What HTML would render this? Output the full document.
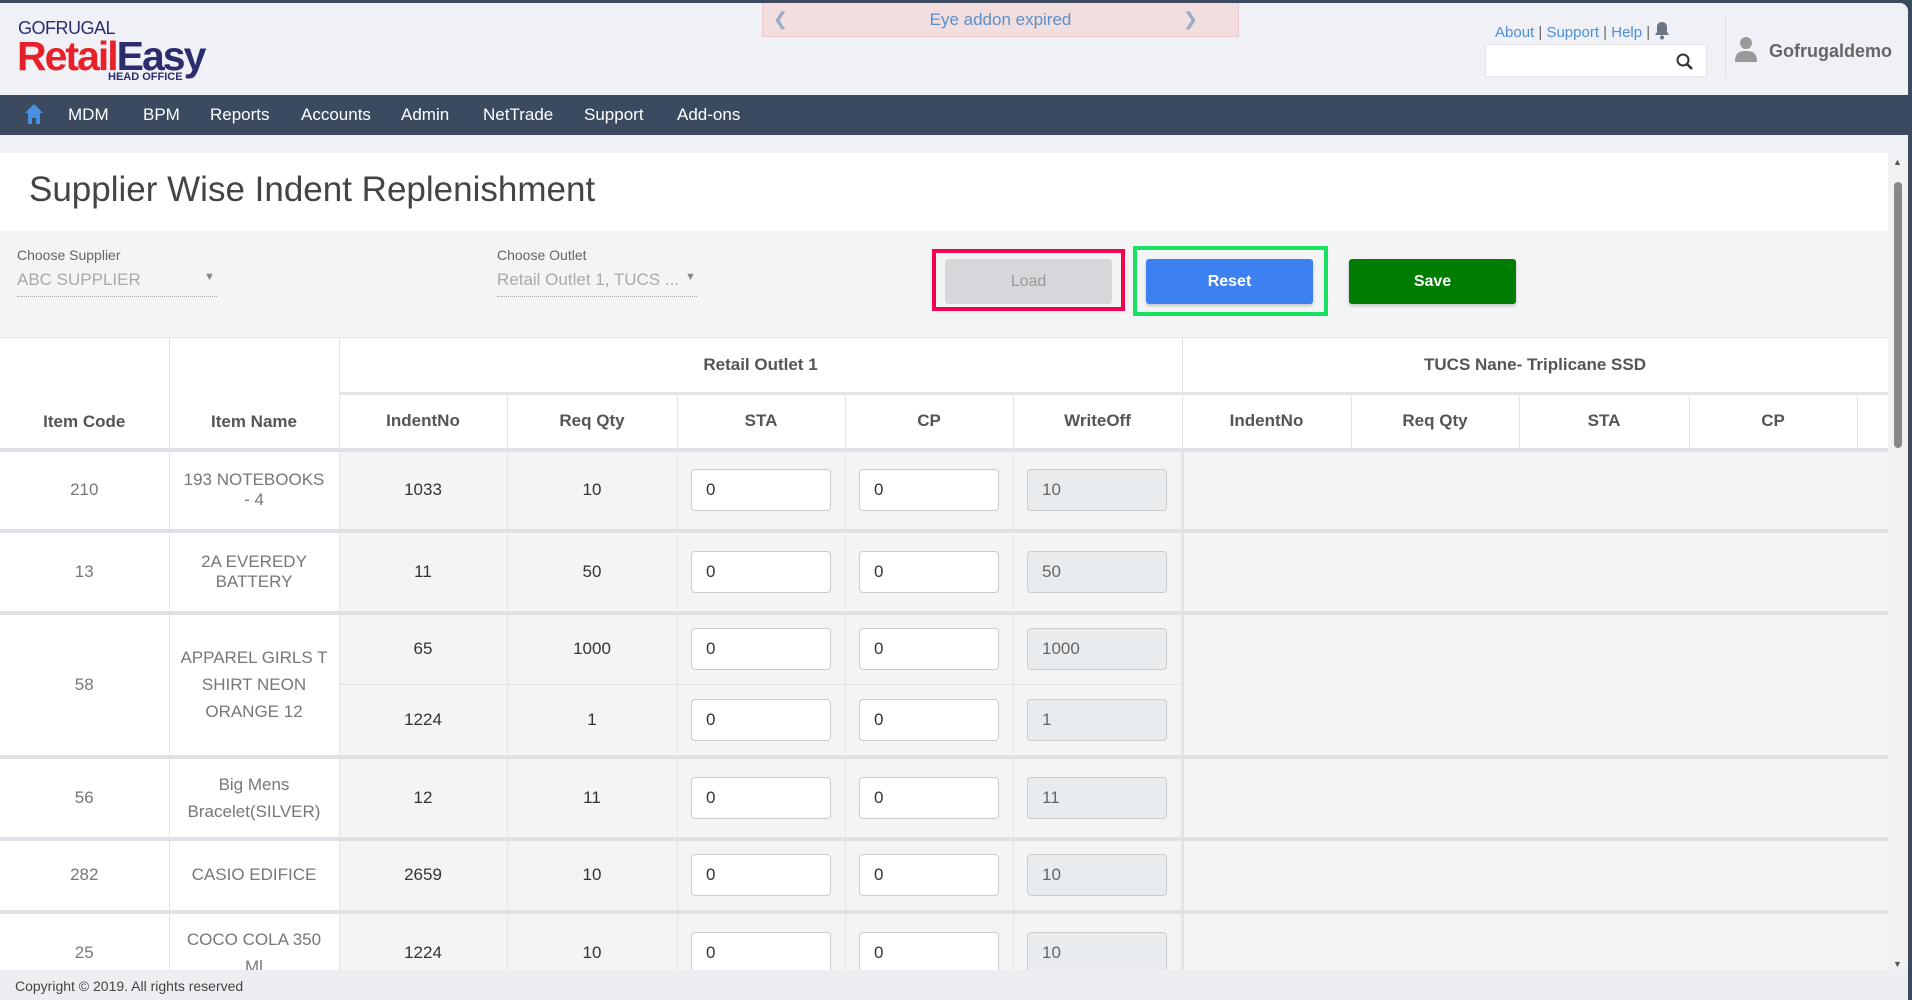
<!DOCTYPE html>
<html><head><meta charset="utf-8"><style>
*{box-sizing:border-box;margin:0;padding:0}
body{width:1912px;height:1000px;overflow:hidden;background:#3b4a5f;font-family:"Liberation Sans",sans-serif;position:relative}
.page{position:absolute;left:0;top:3px;width:1908px;height:997px;background:#f0f1f6;border-top-right-radius:8px;overflow:hidden}
.abs{position:absolute}
.nav{position:absolute;left:0;top:92px;width:1908px;height:40px;background:#3b4a5f;color:#fff;font-size:17px}
.nav span{position:absolute;top:10px}
.content{position:absolute;left:0;top:150px;width:1888px;height:820px;background:#fff;overflow:hidden}
table{border-collapse:collapse;table-layout:fixed;position:absolute;left:0;top:184px;width:1888px}
td{border:1px solid #e3e4e8;text-align:center;font-size:17px;color:#333;padding:0}
th{border:1px solid #e3e4e8;font-size:17px;color:#555;font-weight:bold;background:#fff}
tr>*:first-child{border-left:none}
.g{background:#f3f4f6}
.w{background:#fff;color:#777}
.inp{display:block;margin:0 auto;width:140px;height:42px;border:1px solid #ccc;border-radius:4px;background:#fff;text-align:left;padding-left:14px;line-height:40px;font-size:17px;color:#333}
.ro{background:#e9ecef;color:#666}
.thick td{border-top:4px solid #dfe1e6}
.btn{position:absolute;top:106px;height:45px;width:167px;border-radius:3px;text-align:center;line-height:45px;font-size:16px;font-weight:bold;color:#fff}
</style></head><body>
<div class="page">
 <div class="abs" style="left:18px;top:15px;font-size:18px;color:#2b2d6e;letter-spacing:-0.5px">GOFRUGAL</div>
 <div class="abs" style="left:17px;top:30px;font-size:41px;font-weight:bold;letter-spacing:-2px"><span style="color:#e8202a">Retail</span><span style="color:#2b2d6e">Easy</span></div>
 <div class="abs" style="left:108px;top:68px;font-size:11px;font-weight:bold;color:#2b2d6e">HEAD OFFICE</div>
 <div class="abs" style="left:762px;top:0px;width:477px;height:34px;background:#f2dede;border:1px solid #ebcccc;border-top:none;text-align:center;line-height:34px;font-size:17px;color:#5b8fc9">Eye addon expired
  <span class="abs" style="left:10px;top:-1px;color:#9aaac8;font-size:18px">&#10094;</span><span class="abs" style="right:40px;top:-1px;color:#9aaac8;font-size:18px">&#10095;</span></div>
 <div class="abs" style="left:1495px;top:21px;font-size:15px;color:#4a90d9">About <span style="color:#666">|</span> Support <span style="color:#666">|</span> Help <span style="color:#666">|</span></div>
 <svg class="abs" style="left:1654px;top:18px" width="16" height="19" viewBox="0 0 16 19"><path d="M8 1c-3 0-5 2-5 5v5l-2 3h14l-2-3V6c0-3-2-5-5-5z" fill="#6b7583"/><circle cx="8" cy="16.5" r="2" fill="#6b7583"/></svg>
 <div class="abs" style="left:1485px;top:41px;width:222px;height:33px;background:#fff;border-radius:3px;border:1px solid #e4e4ea"><svg class="abs" style="right:12px;top:8px" width="18" height="18" viewBox="0 0 18 18"><circle cx="7" cy="7" r="5.5" fill="none" stroke="#333" stroke-width="2"/><path d="M11 11l5 5" stroke="#333" stroke-width="2.5"/></svg></div>
 <div class="abs" style="left:1725px;top:12px;width:1px;height:62px;background:#dcdce2"></div>
 <svg class="abs" style="left:1735px;top:33px" width="22" height="28" viewBox="0 0 22 28"><circle cx="11" cy="7" r="6" fill="#999"/><path d="M0 26c0-9 4-11 11-11s11 2 11 11z" fill="#999"/></svg>
 <div class="abs" style="left:1769px;top:38px;font-size:18px;font-weight:bold;color:#666">Gofrugaldemo</div>
 <div class="nav">
  <svg class="abs" style="left:24px;top:8px" width="20" height="22" viewBox="0 0 20 22"><path d="M10 1L1 10h3v11h4v-6h4v6h4V10h3z" fill="#4a90e2"/></svg>
  <span style="left:68px">MDM</span><span style="left:143px">BPM</span><span style="left:210px">Reports</span><span style="left:301px">Accounts</span><span style="left:401px">Admin</span><span style="left:483px">NetTrade</span><span style="left:584px">Support</span><span style="left:677px">Add-ons</span>
 </div>
 <div class="content">
  <div class="abs" style="left:29px;top:17px;font-size:35px;color:#444;font-weight:300">Supplier Wise Indent Replenishment</div>
  <div class="abs" style="left:0;top:78px;width:1888px;height:106px;background:#f3f4f6"></div>
  <div class="abs" style="left:17px;top:94px;font-size:14px;color:#666">Choose Supplier</div>
  <div class="abs" style="left:17px;top:117px;font-size:17px;color:#aaa">ABC SUPPLIER</div>
  <div class="abs" style="left:204px;top:118px;font-size:11px;color:#888">&#9660;</div>
  <div class="abs" style="left:17px;top:143px;width:200px;border-top:1px dotted #aaa"></div>
  <div class="abs" style="left:497px;top:94px;font-size:14px;color:#666">Choose Outlet</div>
  <div class="abs" style="left:497px;top:117px;font-size:17px;color:#aaa">Retail Outlet 1, TUCS ...</div>
  <div class="abs" style="left:685px;top:118px;font-size:11px;color:#888">&#9660;</div>
  <div class="abs" style="left:497px;top:143px;width:200px;border-top:1px dotted #aaa"></div>
  <div class="abs" style="left:932px;top:96px;width:193px;height:62px;border:4px solid #f5004f"></div>
  <div class="btn" style="left:945px;background:#d6d7db;color:#999;font-weight:normal">Load</div>
  <div class="abs" style="left:1133px;top:93px;width:195px;height:70px;border:4px solid #18e060"></div>
  <div class="btn" style="left:1146px;background:#3d80f2;box-shadow:0 2px 3px rgba(0,0,0,.2)">Reset</div>
  <div class="btn" style="left:1349px;background:#007c00;box-shadow:0 2px 3px rgba(0,0,0,.2)">Save</div>
  <table>
   <colgroup><col style="width:169px"><col style="width:170px"><col style="width:168px"><col style="width:170px"><col style="width:168px"><col style="width:168px"><col style="width:169px"><col style="width:169px"><col style="width:168px"><col style="width:170px"><col style="width:168px"><col style="width:31px"></colgroup>
   <tr style="height:56px"><th rowspan="2" style="vertical-align:bottom;padding-bottom:16px">Item Code</th><th rowspan="2" style="vertical-align:bottom;padding-bottom:16px">Item Name</th><th colspan="5" style="border-bottom:3px solid #e3e4e8">Retail Outlet 1</th><th colspan="5" style="border-bottom:3px solid #e3e4e8">TUCS Nane- Triplicane SSD</th></tr>
   <tr style="height:56px"><th style="border-left:1px solid #e3e4e8">IndentNo</th><th>Req Qty</th><th>STA</th><th>CP</th><th>WriteOff</th><th>IndentNo</th><th>Req Qty</th><th>STA</th><th>CP</th><th></th></tr>
   <tr class="thick" style="height:81px"><td class="w">210</td><td class="w">193 NOTEBOOKS<br>- 4</td><td class="g">1033</td><td class="g">10</td><td class="g"><div class="inp">0</div></td><td class="g"><div class="inp">0</div></td><td class="g"><div class="inp ro">10</div></td><td class="g" colspan="5" style="border-left:3px solid #e3e4e8"></td></tr>
   <tr class="thick" style="height:82px"><td class="w">13</td><td class="w">2A EVEREDY<br>BATTERY</td><td class="g">11</td><td class="g">50</td><td class="g"><div class="inp">0</div></td><td class="g"><div class="inp">0</div></td><td class="g"><div class="inp ro">50</div></td><td class="g" colspan="5" style="border-left:3px solid #e3e4e8"></td></tr>
   <tr class="thick" style="height:72px"><td class="w" rowspan="2">58</td><td class="w" rowspan="2" style="line-height:27px">APPAREL GIRLS T<br>SHIRT NEON<br>ORANGE 12</td><td class="g">65</td><td class="g">1000</td><td class="g"><div class="inp">0</div></td><td class="g"><div class="inp">0</div></td><td class="g"><div class="inp ro">1000</div></td><td class="g" colspan="5" rowspan="2" style="border-left:3px solid #e3e4e8"></td></tr>
   <tr style="height:72px"><td class="g" style="border-left:1px solid #e3e4e8">1224</td><td class="g">1</td><td class="g"><div class="inp">0</div></td><td class="g"><div class="inp">0</div></td><td class="g"><div class="inp ro">1</div></td></tr>
   <tr class="thick" style="height:82px"><td class="w">56</td><td class="w" style="line-height:27px">Big Mens<br>Bracelet(SILVER)</td><td class="g">12</td><td class="g">11</td><td class="g"><div class="inp">0</div></td><td class="g"><div class="inp">0</div></td><td class="g"><div class="inp ro">11</div></td><td class="g" colspan="5" style="border-left:3px solid #e3e4e8"></td></tr>
   <tr class="thick" style="height:73px"><td class="w">282</td><td class="w">CASIO EDIFICE</td><td class="g">2659</td><td class="g">10</td><td class="g"><div class="inp">0</div></td><td class="g"><div class="inp">0</div></td><td class="g"><div class="inp ro">10</div></td><td class="g" colspan="5" style="border-left:3px solid #e3e4e8"></td></tr>
   <tr class="thick" style="height:82px"><td class="w">25</td><td class="w" style="line-height:27px">COCO COLA 350<br>Ml</td><td class="g">1224</td><td class="g">10</td><td class="g"><div class="inp">0</div></td><td class="g"><div class="inp">0</div></td><td class="g"><div class="inp ro">10</div></td><td class="g" colspan="5" style="border-left:3px solid #e3e4e8"></td></tr>
  </table>
 </div>
 <div class="abs" style="left:1888px;top:150px;width:20px;height:820px;background:#f1f1f1">
  <div class="abs" style="left:6px;top:29px;width:8px;height:266px;background:#888;border-radius:4px"></div>
  <div class="abs" style="left:5px;top:4px;font-size:9px;color:#555">&#9650;</div>
  <div class="abs" style="left:5px;bottom:4px;font-size:9px;color:#555">&#9660;</div>
 </div>
 <div class="abs" style="left:0;top:967px;width:1908px;height:30px;background:#eceef2;font-size:14px;color:#444;padding:8px 15px">Copyright © 2019. All rights reserved</div>
</div>
</body></html>
